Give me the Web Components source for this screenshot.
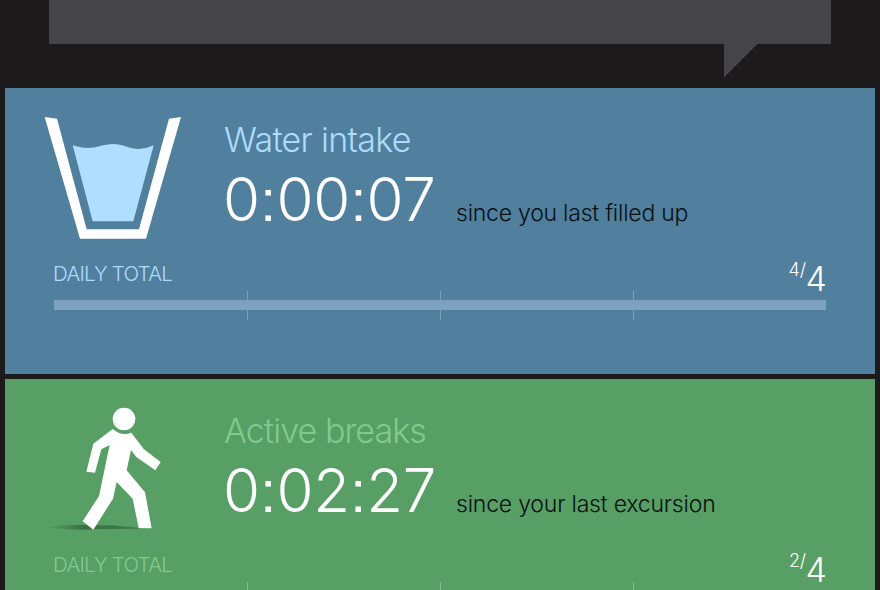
<!DOCTYPE html>
<html lang="en">
<head>
<meta charset="utf-8">
<title>Daily tracker</title>
<style>
  body {
    margin: 0;
    width: 880px;
    height: 590px;
    overflow: hidden;
    background: #1d1a1b;
    font-family: Inter, "Liberation Sans", sans-serif;
    font-weight: 300;
    font-feature-settings: "calt" 0, "ss07" 1;
  }
</style>
</head>
<body>
<tracker-app></tracker-app>

<script>
class SpeechBubble extends HTMLElement {
  constructor() {
    super();
    this.attachShadow({ mode: 'open' });
  }

  connectedCallback() {
    this.shadowRoot.innerHTML = `
      <style>
        :host {
          display: flex;
          flex-direction: column;
          height: 88px;
          padding: 0 49px;
          box-sizing: border-box;
        }

        .body {
          height: 43.5px;
          background: #454446;
        }

        .tail {
          width: 34px;
          height: 34px;
          margin-left: 675px;
          background: #454446;
          clip-path: polygon(0 0, 100% 0, 0 100%);
        }
      </style>
      <div class="body"><slot></slot></div>
      <div class="tail"></div>
    `;
  }
}

class ActivityIcon extends HTMLElement {
  constructor() {
    super();
    this.attachShadow({ mode: 'open' });
  }

  connectedCallback() {
    this.shadowRoot.innerHTML = `
      <style>
        :host { display: block; width: 170px; height: 150px; }
        svg { display: block; }
      </style>
      ${this.getIcon(this.getAttribute('name'))}
    `;
  }

  getIcon(name) {
    const icons = {
      glass: `
        <svg width="170" height="150" viewBox="0 0 510 450">
          <path fill="#fff" d="M44 51L81 56L170 388H327L417 56L453 51L348 416H150Z"/>
          <path fill="#b0deff" d="M128 136C142 140 156 144 173 144C199 144 222 132 249 132C277 132 300 147 326 147C343 147 358 141 371 136L310 364H188Z"/>
        </svg>`,
      walker: `
        <svg width="170" height="150" viewBox="0 -12 510 450">
          <defs>
            <linearGradient id="shade">
              <stop offset="0" stop-color="#25542e" stop-opacity="0"/>
              <stop offset=".4" stop-color="#25542e" stop-opacity=".6"/>
              <stop offset="1" stop-color="#25542e" stop-opacity=".5"/>
            </linearGradient>
            <filter id="soft" x="-10%" y="-50%" width="120%" height="200%">
              <feGaussianBlur stdDeviation="2"/>
            </filter>
          </defs>
          <path fill="url(#shade)" filter="url(#soft)" d="M50 397C85 391 125 389 185 391L240 391C275 394 305 396 326 399L326 401L210 402C150 407 100 404 50 397Z"/>
          <circle cx="282" cy="72" r="34" fill="#fff"/>
          <path fill="#fff" d="M248 102Q275 125 304 113L341 162L392 201L376 226L319 186L303 165L290 226L345 292L365 400L326 399L308 311L260 261L249 311L190 404L158 379L207 303L239 150L214 163L195 233L169 230L190 146Z"/>
        </svg>`
    };
    return icons[name] || '';
  }
}

class GoalProgress extends HTMLElement {
  constructor() {
    super();
    this.attachShadow({ mode: 'open' });
  }

  connectedCallback() {
    const done = this.getAttribute('done');
    const goal = this.getAttribute('goal');

    this.shadowRoot.innerHTML = `
      <style>
        :host { display: block; width: 772px; }

        .row {
          display: flex;
          justify-content: space-between;
          height: 41px;
        }

        .label {
          font-size: 20.5px;
          line-height: 24px;
          letter-spacing: -0.75px;
          margin: 12px 0 0 -1px;
          color: var(--accent);
        }

        .count {
          display: flex;
          color: #fff;
          font-size: 34px;
          line-height: 40px;
          margin: 9px -1px 0 0;
        }

        .done {
          font-size: 18px;
          line-height: 22px;
          letter-spacing: -0.3px;
        }

        .track {
          display: grid;
          grid-template-columns: repeat(4, 1fr);
          height: 29px;
          background: linear-gradient(var(--line), var(--line)) 0 9px / 100% 10px no-repeat;
        }

        .track span + span {
          border-left: 1px solid var(--line);
        }
      </style>
      <div class="row">
        <span class="label"><slot></slot></span>
        <span class="count"><span class="done">${done}/</span><span class="goal">${goal}</span></span>
      </div>
      <div class="track"><span></span><span></span><span></span><span></span></div>
    `;
  }
}

class ActivityCard extends HTMLElement {
  constructor() {
    super();
    this.attachShadow({ mode: 'open' });
  }

  connectedCallback() {
    this.shadowRoot.innerHTML = `
      <style>
        :host {
          display: block;
          box-sizing: border-box;
          height: 286px;
          padding: 12px 25px 0;
          background: var(--bg);
        }

        .top {
          display: flex;
          gap: 24px;
        }

        .title {
          font-size: 34px;
          line-height: 40px;
          margin-top: 20px;
          letter-spacing: var(--title-spacing);
          color: var(--accent);
        }

        .timer {
          display: flex;
          align-items: baseline;
          line-height: 72px;
          margin-top: 3px;
          white-space: nowrap;
        }

        .time {
          width: 233px;
          margin-left: -1px;
          font-size: 60px;
          letter-spacing: -0.3px;
          color: #fff;
        }

        .note {
          font-size: 23px;
          letter-spacing: var(--note-spacing);
          color: #071013;
        }

        goal-progress {
          margin: 0 0 0 24px;
        }
      </style>
      <div class="top">
        <activity-icon name="${this.getAttribute('icon')}"></activity-icon>
        <div>
          <div class="title"><slot name="title"></slot></div>
          <div class="timer">
            <span class="time"><slot name="time"></slot></span>
            <span class="note"><slot name="note"></slot></span>
          </div>
        </div>
      </div>
      <goal-progress done="${this.getAttribute('done')}" goal="${this.getAttribute('goal')}">DAILY TOTAL</goal-progress>
    `;
  }
}

class TrackerApp extends HTMLElement {
  constructor() {
    super();
    this.attachShadow({ mode: 'open' });
  }

  connectedCallback() {
    this.shadowRoot.innerHTML = `
      <style>
        :host {
          display: block;
          height: 590px;
          overflow: hidden;
        }

        .cards {
          display: grid;
          gap: 5px;
          padding: 0 5px;
        }

        .water {
          --bg: #51809e;
          --accent: #acdcff;
          --line: #7ba2be;
          --title-spacing: -0.7px;
          --note-spacing: -0.23px;
        }

        .active {
          --bg: #589f65;
          --accent: #83ca8f;
          --line: #83c08e;
          --title-spacing: -0.9px;
          --note-spacing: -0.2px;
        }
      </style>
      <speech-bubble></speech-bubble>
      <div class="cards">
        <activity-card class="water" icon="glass" done="4" goal="4">
          <span slot="title">Water intake</span>
          <span slot="time">0:00:07</span>
          <span slot="note">since you last filled up</span>
        </activity-card>
        <activity-card class="active" icon="walker" done="2" goal="4">
          <span slot="title">Active breaks</span>
          <span slot="time">0:02:27</span>
          <span slot="note">since your last excursion</span>
        </activity-card>
      </div>
    `;
  }
}

customElements.define('speech-bubble', SpeechBubble);
customElements.define('activity-icon', ActivityIcon);
customElements.define('goal-progress', GoalProgress);
customElements.define('activity-card', ActivityCard);
customElements.define('tracker-app', TrackerApp);
</script>
</body>
</html>
